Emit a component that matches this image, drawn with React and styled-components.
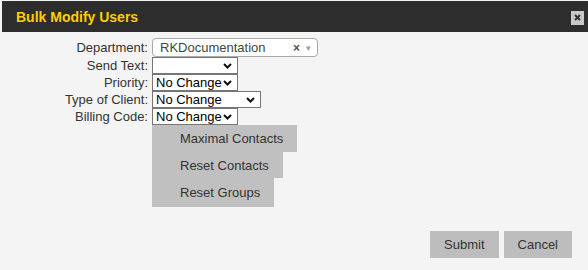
import React from 'react'
import styled, { createGlobalStyle } from 'styled-components'

const Global = createGlobalStyle`
    body {
        margin: 0;
        background: #f4f4f4;
        font-family: "Liberation Sans", Arial, sans-serif;
    }
`;

const selects = [
    { label: 'Send Text:', value: '', width: 86, options: ['', 'Yes', 'No'] },
    { label: 'Priority:', value: 'No Change', width: 86, options: ['No Change', 'High', 'Low'] },
    { label: 'Type of Client:', value: 'No Change', width: 109, options: ['No Change', 'Residential', 'Commercial'] },
    { label: 'Billing Code:', value: 'No Change', width: 86, options: ['No Change', 'A', 'B'] },
];

const actions = [
    { title: 'Maximal Contacts', h: 27 },
    { title: 'Reset Contacts', h: 26 },
    { title: 'Reset Groups', h: 29 },
];

export default function App() {
    return (
        <Dialog>
            <Global />
            <TitleBar>
                <Title>Bulk Modify Users</Title>
                <CloseBtn>
                    <svg width="7" height="7" viewBox="0 0 7 7">
                        <path d="M1 1L6 6M6 1L1 6" stroke="#333" strokeWidth="2" />
                    </svg>
                </CloseBtn>
            </TitleBar>
            <Body>
                <Form>
                    <Label>Department:</Label>
                    <Combo>
                        <ComboText>RKDocumentation</ComboText>
                        <ComboClear>×</ComboClear>
                        <ComboArrow>▾</ComboArrow>
                    </Combo>
                    {selects.map(s => (
                        <React.Fragment key={s.label}>
                            <Label>{s.label}</Label>
                            <Cell>
                                <Select $w={s.width} defaultValue={s.value}>
                                    {s.options.map(o => <option key={o} value={o}>{o}</option>)}
                                </Select>
                                <Chevron width="9" height="6" viewBox="0 0 9 6">
                                    <path d="M1 1L4.5 4.5L8 1" fill="none" stroke="#111" strokeWidth="2" />
                                </Chevron>
                            </Cell>
                        </React.Fragment>
                    ))}
                    <Spacer />
                    <Actions>
                        {actions.map(a => (
                            <ActionBtn key={a.title} $h={a.h}>{a.title}</ActionBtn>
                        ))}
                    </Actions>
                </Form>
                <Footer>
                    <FootBtn>Submit</FootBtn>
                    <FootBtn>Cancel</FootBtn>
                </Footer>
            </Body>
        </Dialog>
    )
}

const Dialog = styled.div`
    height: 270px;
    background: #f4f4f4;
    padding-top: 1px;
    box-sizing: border-box;
    display: flex;
    flex-direction: column;
`;

const TitleBar = styled.div`
    margin-left: 2px;
    height: 31px;
    background: #2d2d2d;
    display: flex;
    align-items: center;
    justify-content: space-between;
    padding: 0 4px 0 14px;
`;

const Title = styled.span`
    font-family: "Liberation Sans Narrow", "Arial Narrow", "Liberation Sans", sans-serif;
    font-weight: bold;
    font-size: 14px;
    color: #ffcc00;
    margin-top: 1px;
`;

const CloseBtn = styled.span`
    width: 13px;
    height: 14px;
    background: #c8c8c8;
    display: flex;
    align-items: center;
    justify-content: center;
    margin-top: 2px;
`;

const Body = styled.div`
    flex: 1;
    display: flex;
    flex-direction: column;
    justify-content: space-between;
    padding: 6px 0 12px;
`;

const Form = styled.div`
    display: grid;
    grid-template-columns: 148px auto;
    column-gap: 4px;
    align-items: center;
    font-size: 13px;
`;

const Label = styled.div`
    text-align: right;
    color: #333;
    font-size: 13px;
    line-height: 17px;
`;

const Cell = styled.div`
    position: relative;
    display: flex;
    width: max-content;
`;

const Combo = styled.div`
    width: 166px;
    height: 19px;
    box-sizing: border-box;
    border: 1px solid #aaa;
    border-radius: 4px;
    background: #fff;
    display: flex;
    align-items: center;
    padding: 0 6px 0 7px;
`;

const ComboText = styled.span`
    flex: 1;
    font-size: 13px;
    color: #444;
`;

const ComboClear = styled.span`
    font-size: 12px;
    font-weight: bold;
    color: #555;
    margin-right: 6px;
`;

const ComboArrow = styled.span`
    font-size: 9px;
    color: #999;
`;

const Select = styled.select`
    appearance: none;
    -webkit-appearance: none;
    width: ${p => p.$w}px;
    height: 17px;
    box-sizing: border-box;
    padding: 0 0 0 3px;
    border: 1px solid #767676;
    border-radius: 0;
    background: #fff;
    color: #000;
    font-family: "Liberation Sans", Arial, sans-serif;
    font-size: 13px;
    line-height: 15px;
    margin: 0;
`;

const Chevron = styled.svg`
    position: absolute;
    right: 6px;
    top: 6px;
    pointer-events: none;
`;

const Spacer = styled.div``;

const Actions = styled.div`
    display: flex;
    flex-direction: column;
    align-items: flex-start;
`;

const ActionBtn = styled.div`
    height: ${p => p.$h}px;
    display: flex;
    align-items: center;
    padding: 0 14px 0 28px;
    background: #c0c0c0;
    color: #333;
    font-size: 13px;
`;

const Footer = styled.div`
    display: flex;
    justify-content: flex-end;
    gap: 5px;
    padding-right: 16px;
`;

const FootBtn = styled.div`
    height: 27px;
    display: flex;
    align-items: center;
    padding: 0 14px;
    background: #bdbdbd;
    color: #333;
    font-size: 13px;
`;
